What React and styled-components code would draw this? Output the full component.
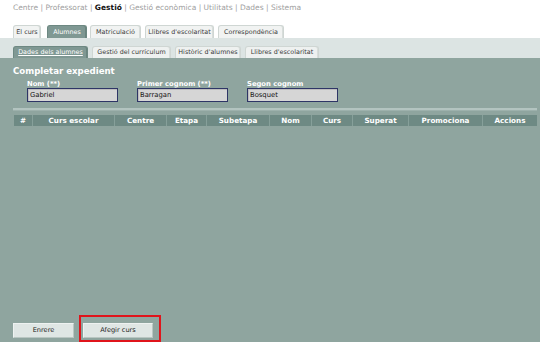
import React from "react";
import styled, { createGlobalStyle } from "styled-components";

const Global = createGlobalStyle`
  html, body { margin: 0; padding: 0; background: #ffffff; }
  body { font-family: "DejaVu Sans", Verdana, sans-serif; }
  #root { width: 540px; height: 342px; overflow: hidden; }
`;

const Page = styled.div`
  width: 540px;
  height: 342px;
  display: flex;
  flex-direction: column;
`;

const Nav = styled.div`
  height: 18px;
  padding: 3px 0 0 13px;
  box-sizing: border-box;
  font-size: 7.5px;
  color: #a0a0a0;
  line-height: 10px;
`;

const NavItem = styled.span`
  color: ${(p) => (p.$active ? "#111" : "#a0a0a0")};
  font-weight: ${(p) => (p.$active ? "bold" : "normal")};
`;

const TabRow = styled.div`
  display: flex;
  padding: 7px 0 0 13px;
  height: 20px;
  box-sizing: border-box;
  align-items: flex-end;
`;

const Tab = styled.div`
  width: ${(p) => p.$w}px;
  margin-right: ${(p) => p.$gap}px;
  height: 13px;
  box-sizing: border-box;
  font-size: 6.4px;
  line-height: 12px;
  text-align: center;
  white-space: nowrap;
  border: 1px solid ${(p) => (p.$active ? "#6d8882" : "#cfd6d3")};
  border-bottom: none;
  border-radius: 3px 3px 0 0;
  background: ${(p) => (p.$active ? "#7f9893" : "#f1f3f2")};
  color: ${(p) => (p.$active ? "#ffffff" : "#3a3a3a")};
  box-shadow: inset -1px 0 0 ${(p) => (p.$active ? "#6a847e" : "#d8dddb")};
`;

const SubBar = styled.div`
  background: #dce4e3;
  height: 20px;
  display: flex;
  padding: 0 0 0 13px;
  box-sizing: border-box;
  align-items: flex-end;
`;

const SubTab = styled(Tab)`
  height: 12px;
  line-height: 11px;
  background: ${(p) => (p.$active ? "#7f9893" : "#eef1f0")};
  text-decoration: ${(p) => (p.$active ? "underline" : "none")};
`;

const Main = styled.div`
  flex: 1;
  background: #8fa59f;
  display: flex;
  flex-direction: column;
  padding: 8px 3px 0 13px;
  box-sizing: border-box;
`;

const Title = styled.div`
  color: #ffffff;
  font-weight: bold;
  font-size: 8.6px;
  line-height: 11px;
`;

const Fields = styled.div`
  display: flex;
  gap: 19px;
  padding-left: 14px;
  margin-top: 3px;
`;

const Field = styled.div`
  display: flex;
  flex-direction: column;
  width: 91px;
`;

const Label = styled.div`
  color: #ffffff;
  font-weight: bold;
  font-size: 6.8px;
  line-height: 8px;
`;

const Input = styled.div`
  height: 14px;
  box-sizing: border-box;
  border: 1px solid #2e3566;
  background: #d6d6d6;
  box-shadow: inset 1px 1px 0 #bcbcbc;
  font-size: 6.8px;
  line-height: 12px;
  padding-left: 2px;
  color: #111;
`;

const Separator = styled.div`
  height: 2px;
  background: #b3c4c0;
  margin-top: 6px;
  border-bottom: 1px solid #9db1ac;
`;

const Table = styled.div`
  display: grid;
  grid-template-columns: 18px 82px 52px 40px 63px 42px 41px 56px 74px 55px;
  margin-top: 4px;
  margin-left: 1px;
`;

const Th = styled.div`
  height: 11px;
  background: #6e8a84;
  color: #ffffff;
  font-weight: bold;
  font-size: 7.2px;
  line-height: 11px;
  text-align: center;
  white-space: nowrap;
  border-left: 1px solid #86a09a;
  &:first-child { border-left: none; }
`;

const Footer = styled.div`
  margin-top: auto;
  display: flex;
  gap: 9px;
  padding-bottom: 4px;
`;

const Button = styled.div`
  position: relative;
  width: ${(p) => p.$w}px;
  height: 15px;
  box-sizing: border-box;
  background: #dfe6e4;
  border: 1px solid #eef2f1;
  border-right-color: #b9c6c2;
  border-bottom-color: #b9c6c2;
  font-size: 6.6px;
  line-height: 13px;
  text-align: center;
  color: #222;
`;

const Highlight = styled.div`
  position: absolute;
  left: -5px;
  top: -9px;
  right: -9px;
  bottom: -5px;
  border: 2px solid #e0141b;
  pointer-events: none;
`;

const navItems = [
  "Centre",
  "Professorat",
  "Gestió",
  "Gestió econòmica",
  "Utilitats",
  "Dades",
  "Sistema",
];

const tabs = [
  { t: "El curs", w: 28, g: 6 },
  { t: "Alumnes", w: 40, g: 3 },
  { t: "Matriculació", w: 51, g: 4 },
  { t: "Llibres d'escolaritat", w: 69, g: 4 },
  { t: "Correspondència", w: 66, g: 0 },
];
const subTabs = [
  { t: "Dades dels alumnes", w: 75, g: 4 },
  { t: "Gestió del currículum", w: 79, g: 4 },
  { t: "Històric d'alumnes", w: 66, g: 4 },
  { t: "Llibres d'escolaritat", w: 74, g: 0 },
];
const fields = [
  { label: "Nom (**)", value: "Gabriel" },
  { label: "Primer cognom (**)", value: "Barragan" },
  { label: "Segon cognom", value: "Bosquet" },
];
const cols = ["#", "Curs escolar", "Centre", "Etapa", "Subetapa", "Nom", "Curs", "Superat", "Promociona", "Accions"];

export default function App() {
  return (
    <Page>
      <Global />
      <Nav>
        {navItems.map((n, i) => (
          <React.Fragment key={n}>
            {i > 0 && " | "}
            <NavItem $active={n === "Gestió"}>{n}</NavItem>
          </React.Fragment>
        ))}
      </Nav>
      <TabRow>
        {tabs.map((t) => (
          <Tab key={t.t} $w={t.w} $gap={t.g} $active={t.t === "Alumnes"}>{t.t}</Tab>
        ))}
      </TabRow>
      <SubBar>
        {subTabs.map((t, i) => (
          <SubTab key={t.t + i} $w={t.w} $gap={t.g} $active={i === 0}>{t.t}</SubTab>
        ))}
      </SubBar>
      <Main>
        <Title>Completar expedient</Title>
        <Fields>
          {fields.map((f) => (
            <Field key={f.label}>
              <Label>{f.label}</Label>
              <Input>{f.value}</Input>
            </Field>
          ))}
        </Fields>
        <Separator />
        <Table>
          {cols.map((c) => (
            <Th key={c}>{c}</Th>
          ))}
        </Table>
        <Footer>
          <Button $w={61}>Enrere</Button>
          <Button $w={70}>
            Afegir curs
            <Highlight />
          </Button>
        </Footer>
      </Main>
    </Page>
  );
}
